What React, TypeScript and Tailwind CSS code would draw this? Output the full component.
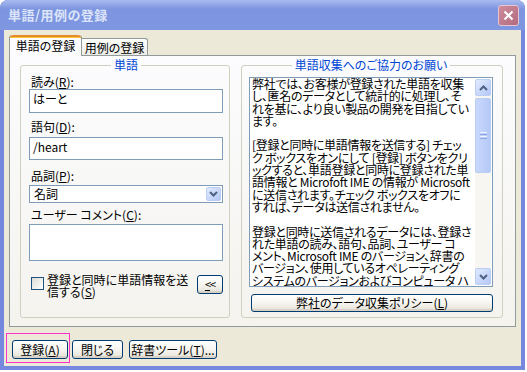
import type { ReactNode } from 'react';

const U = ({ children }: { children: ReactNode }) => (
  <span className="underline decoration-1 underline-offset-[1px]">{children}</span>
);

const XpButton = ({ className = '', children }: { className?: string; children: ReactNode }) => (
  <div
    className={`flex items-center justify-center rounded-[3px] border border-[#003c74] bg-linear-to-b from-[#ffffff] via-[#f6f5f0] to-[#e4e2d6] shadow-[inset_0_-2px_0_#d8d2c6] leading-none ${className}`}
  >
    {children}
  </div>
);

const Chevron = ({ up = false }: { up?: boolean }) => (
  <svg width="9" height="6" viewBox="0 0 9 6" className={up ? 'rotate-180' : ''}>
    <path d="M1 1L4.5 4.5L8 1" fill="none" stroke="#4d6185" strokeWidth="2" />
  </svg>
);

const Label = ({ children, className = '' }: { children: ReactNode; className?: string }) => (
  <div className={`h-[14px] pl-[2px] leading-[14px] ${className}`}>{children}</div>
);

const infoLines = [
  '弊社では、お客様が登録された単語を収集',
  'し、匿名のデータとして統計的に処理し、そ',
  'れを基に、より良い製品の開発を目指してい',
  'ます。',
  '',
  '[登録と同時に単語情報を送信する] チェッ',
  'ク ボックスをオンにして [登録] ボタンをクリ',
  'ックすると、単語登録と同時に登録された単',
  '語情報と Microfoft IME の情報が Microsoft',
  'に送信されます。チェック ボックスをオフに',
  'すれば、データは送信されません。',
  '',
  '登録と同時に送信されるデータには、登録さ',
  'れた単語の読み、語句、品詞、ユーザー コ',
  'メント、Microsoft IME のバージョン、辞書の',
  'バージョン、使用しているオペレーティング',
  'システムのバージョンおよびコンピュータ ハ',
];

export default function App() {
  return (
    <div className="h-[372px] w-[527px] overflow-hidden bg-white font-['Noto_Sans_CJK_JP',sans-serif] text-[12px] text-black [font-feature-settings:'palt']">
      <div className="flex h-[370px] w-[525px] flex-col rounded-t-[8px] bg-[#7588de]">
        {/* title bar */}
        <div className="flex h-[30px] items-center justify-between rounded-t-[8px] bg-linear-to-b from-[#a9bbef] via-[#7d95e0] via-30% to-[#7f97e1] pl-[8px] pr-[6px]">
          <span className="text-[13px] font-bold tracking-[0.5px] text-[#dbe4f8]">単語/用例の登録</span>
          <div className="flex h-[21px] w-[21px] items-center justify-center rounded-[3px] border border-[#e6c6d0] bg-linear-to-br from-[#cf8d9b] to-[#b26a80]">
            <svg width="11" height="11" viewBox="0 0 11 11">
              <path d="M1.5 1.5L9.5 9.5M9.5 1.5L1.5 9.5" stroke="#ffffff" strokeWidth="2" />
            </svg>
          </div>
        </div>

        {/* client area */}
        <div className="mx-[4px] flex flex-1 flex-col bg-[#ece9d8]">
          <div className="px-[5px] pt-[5px]">
            {/* tabs */}
            <div className="flex h-[20px] items-end">
              <div className="relative z-10 -mb-px flex h-[21px] w-[73px] flex-col rounded-t-[3px] border-x border-[#919b9c] bg-[#fcfcfe]">
                <div className="h-[3px] rounded-t-[3px] border-t-2 border-[#e68b2c] bg-[#ffc73c]" />
                <div className="flex flex-1 items-center justify-center pb-[3px] leading-none">単語の登録</div>
              </div>
              <div className="flex h-[17px] w-[66px] items-center justify-center rounded-tr-[3px] border-r border-t border-[#919b9c] bg-linear-to-b from-white to-[#ecebe5] pt-[1px] leading-none">
                用例の登録
              </div>
            </div>

            {/* tab panel */}
            <div className="flex h-[272px] gap-[11px] border border-[#919b9c] bg-linear-to-b from-[#fcfcfe] to-[#f4f3ee] pb-[8px] pl-[10px] pr-[12px] pt-[2px]">
              {/* left group */}
              <fieldset className="flex w-[210px] flex-col rounded-[3px] border border-[#d0d0bf] pl-[8px] pr-[6px]">
                <legend className="mx-auto px-[3px] leading-[14px] text-[#0046d5]">単語</legend>
                <Label className="mt-[3px]">
                  読み(<U>R</U>):
                </Label>
                <div className="h-[24px] border border-[#7f9db9] bg-white pl-[3px] pt-[2px] leading-[14px]">はーと</div>
                <Label className="mt-[7px]">
                  語句(<U>D</U>):
                </Label>
                <div className="mt-[3px] h-[23px] border border-[#7f9db9] bg-white pl-[3px] pt-[2px] leading-[14px]">/heart</div>
                <Label className="mt-[9px]">
                  品詞(<U>P</U>):
                </Label>
                <div className="mt-[2px] flex h-[18px] items-center justify-between border border-[#7f9db9] bg-white pl-[4px] pr-px">
                  <span className="leading-none">名詞</span>
                  <div className="flex h-[14px] w-[15px] items-center justify-center rounded-[2px] border border-[#bccdf4] bg-linear-to-br from-[#e1eafe] to-[#b4c8f6]">
                    <Chevron />
                  </div>
                </div>
                <Label className="mt-[5px]">
                  ユーザー コメント(<U>C</U>):
                </Label>
                <div className="mt-[2px] h-[37px] border border-[#7f9db9] bg-white" />
                <div className="mt-[13px] flex items-start justify-between">
                  <div className="flex items-start">
                    <div className="ml-[2px] mt-[3px] h-[13px] w-[13px] border border-[#1c5180] bg-linear-to-br from-[#dcdcd6] to-white" />
                    <div className="ml-[3px] leading-[12px]">
                      登録と同時に単語情報を送
                      <br />
                      信する(<U>S</U>)
                    </div>
                  </div>
                  <XpButton className="mt-px h-[19px] w-[26px] text-[11px] tracking-[-1px]">
                    <U>&lt;</U>&lt;
                  </XpButton>
                </div>
              </fieldset>

              {/* right group */}
              <fieldset className="flex w-[262px] flex-col rounded-[3px] border border-[#d0d0bf] pl-[7px] pr-[9px]">
                <legend className="mx-auto px-[3px] leading-[14px] text-[#0046d5]">単語収集へのご協力のお願い</legend>
                <div className="mt-[5px] flex h-[210px] border border-[#7f9db9] bg-white">
                  <div className="flex-1 overflow-hidden pl-[2px] tracking-[-0.3px]">
                    {infoLines.map((line, i) => (
                      <div key={i} className="h-[12.3px] whitespace-pre leading-[12.3px]">
                        {line || ' '}
                      </div>
                    ))}
                  </div>
                  <div className="my-px mr-px flex w-[16px] flex-col bg-[#f7f6f1]">
                    <div className="flex h-[17px] items-center justify-center rounded-[2px] border border-[#bccdf4] bg-linear-to-br from-[#e1eafe] to-[#b4c8f6]">
                      <Chevron up />
                    </div>
                    <div className="mt-[2px] flex h-[75px] flex-col items-center justify-center gap-[1px] rounded-[2px] border border-[#bccdf4] bg-linear-to-r from-[#c9d8fc] to-[#b5c9f7]">
                      <div className="h-px w-[7px] bg-[#eef3fe]" />
                      <div className="h-px w-[7px] bg-[#8da6e4]" />
                      <div className="h-px w-[7px] bg-[#eef3fe]" />
                      <div className="h-px w-[7px] bg-[#8da6e4]" />
                    </div>
                    <div className="flex-1" />
                    <div className="flex h-[17px] items-center justify-center rounded-[2px] border border-[#bccdf4] bg-linear-to-br from-[#e1eafe] to-[#b4c8f6]">
                      <Chevron />
                    </div>
                  </div>
                </div>
                <XpButton className="ml-[2px] mt-[7px] h-[18px]">
                  弊社のデータ収集ポリシー(<U>L</U>)
                </XpButton>
              </fieldset>
            </div>
          </div>

          {/* bottom buttons */}
          <div className="mt-[13px] flex pl-[8px]">
            <div className="relative">
              <XpButton className="h-[19px] w-[56px]">
                登録(<U>A</U>)
              </XpButton>
              <div className="absolute left-[-6px] top-[-7px] h-[30px] w-[64px] border border-[#ff33cc]" />
            </div>
            <XpButton className="ml-[4px] h-[19px] w-[51px]">閉じる</XpButton>
            <XpButton className="ml-[6px] h-[19px] w-[88px]">
              辞書ツール(<U>T</U>)...
            </XpButton>
          </div>
        </div>
        <div className="h-[4px]" />
      </div>
    </div>
  );
}
